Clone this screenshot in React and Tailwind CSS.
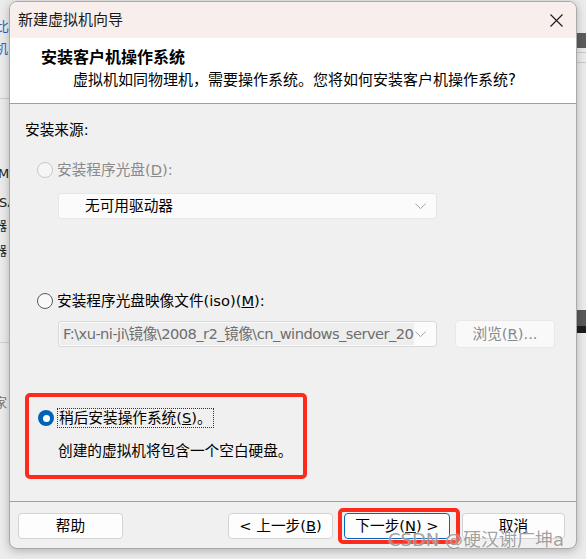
import React from 'react';

const Radio = ({ state }) => {
  if (state === 'checked') {
    return (
      <span className="w-4 h-4 shrink-0 rounded-full bg-[#0063b8] flex items-center justify-center">
        <span className="w-[7px] h-[7px] rounded-full bg-white" />
      </span>
    );
  }
  if (state === 'disabled') {
    return <span className="w-4 h-4 shrink-0 rounded-full border border-[#c8c8c8] bg-[#f6f6f6]" />;
  }
  return <span className="w-4 h-4 shrink-0 rounded-full border border-[#5a5a5a] bg-[#f9f9f9]" />;
};

const Chevron = () => (
  <svg width="11" height="7" viewBox="0 0 11 7" className="shrink-0">
    <path d="M0.5 0.8L5.5 5.6L10.5 0.8" fill="none" stroke="#a2a2a2" strokeWidth="1" />
  </svg>
);

const Button = ({ children, primary, className = '' }) => (
  <div
    className={`h-[26px] flex items-center justify-center rounded-[4px] bg-[#fdfdfd] text-[14.67px] leading-[20px] text-black ${
      primary ? 'border border-[#0067c0]' : 'border border-[#d3d3d3]'
    } ${className}`}
  >
    {children}
  </div>
);

const App = () => {
  return (
    <div className="w-[586px] h-[559px] relative overflow-hidden bg-[#ececec] font-['DejaVu_Sans','Noto_Sans_CJK_SC',sans-serif]">
      {/* desktop behind the window */}
      <div className="absolute left-[-4px] top-[20px] text-[13px] leading-[14px] text-[#2a62c9]">比</div>
      <div className="absolute left-[-5px] top-[42px] text-[13px] leading-[14px] text-[#2a62c9]">机</div>
      <div className="absolute left-0 top-[98px] w-[10px] h-px bg-[#cfcfcf]" />
      <div className="absolute left-[-2px] top-[167px] text-[13px] leading-[14px] text-[#222]">Me</div>
      <div className="absolute left-[-1px] top-[196px] text-[13px] leading-[14px] text-[#222]">SA</div>
      <div className="absolute left-[-6px] top-[219px] text-[13px] leading-[14px] text-[#222]">器</div>
      <div className="absolute left-[-6px] top-[244px] text-[13px] leading-[14px] text-[#222]">器</div>
      <div className="absolute left-0 top-[342px] w-[10px] h-px bg-[#cfcfcf]" />
      <div className="absolute left-[-6px] top-[396px] text-[13px] leading-[14px] text-[#777]">家</div>
      <div className="absolute right-0 top-[33px] w-[10px] h-[15px] bg-[#5d5d5d]" />
      <div className="absolute right-0 top-[52px] w-[10px] h-px bg-[#c9c9c9]" />
      <div className="absolute right-0 top-[62px] w-[10px] h-px bg-[#c9c9c9]" />
      <div className="absolute right-0 top-[310px] w-[10px] h-[16px] bg-[#5a5a5a]" />
      <div className="absolute right-0 top-[326px] w-[10px] h-[7px] bg-[#1e1e1e]" />

      {/* dialog window */}
      <div className="absolute left-[9px] top-[1px] w-[568px] h-[548px] flex flex-col rounded-[8px] overflow-hidden border border-[#a9a9a9] bg-[#f0f0f0] shadow-[0_2px_10px_rgba(0,0,0,0.25)]">
        {/* title bar */}
        <div className="h-[36px] shrink-0 flex items-center justify-between pl-[8px] pr-[13px] bg-[#f8efec]">
          <span className="text-[15px] leading-[20px] text-[#1a1a1a]">新建虚拟机向导</span>
          <svg width="13" height="13" viewBox="0 0 13 13">
            <path d="M0.5 0.5L12.5 12.5M12.5 0.5L0.5 12.5" stroke="#1a1a1a" strokeWidth="1.1" />
          </svg>
        </div>

        {/* header */}
        <div className="h-[66px] shrink-0 bg-white border-b border-[#a0a0a0] pt-[9px] pl-[31px]">
          <div className="text-[16px] leading-[21px] font-bold text-black">安装客户机操作系统</div>
          <div className="mt-[2px] pl-[32px] text-[15px] leading-[21px] text-black whitespace-nowrap">
            虚拟机如同物理机，需要操作系统。您将如何安装客户机操作系统?
          </div>
        </div>

        {/* body */}
        <div className="h-[398px] shrink-0 flex flex-col pl-[15px] pt-[16px] border-b border-[#a0a0a0]">
          <div className="text-[14.67px] leading-[20px] text-black">安装来源:</div>

          <div className="mt-[20px] ml-[12px] flex items-center gap-[4px] h-[20px]">
            <Radio state="disabled" />
            <span className="text-[14.67px] leading-[20px] text-[#8a8a8a]">
              安装程序光盘(<span className="underline">D</span>):
            </span>
          </div>

          <div className="mt-[13px] ml-[33px] w-[379px] h-[26px] flex items-center justify-between pl-[26px] pr-[10px] rounded-[3px] border border-[#e6e6e6] bg-[#fbfbfb]">
            <span className="text-[14.67px] leading-[20px] text-black">无可用驱动器</span>
            <Chevron />
          </div>

          <div className="mt-[72px] ml-[12px] flex items-center gap-[4px] h-[20px]">
            <Radio state="normal" />
            <span className="text-[14.67px] leading-[20px] text-black">
              安装程序光盘映像文件(iso)(<span className="underline">M</span>):
            </span>
          </div>

          <div className="mt-[10px] ml-[33px] flex items-start gap-[18px]">
            <div className="w-[379px] h-[26px] flex items-center justify-between pr-[10px] rounded-[3px] border border-[#d9d9d9] bg-[#fbfbfb]">
              <div className="w-[354px] h-[22px] ml-[1px] flex items-center pl-[3px] bg-[#eeeeee] overflow-hidden whitespace-nowrap text-[14.67px] leading-[20px] tracking-[-0.55px] text-[#6e6e6e]">
                F:\xu-ni-ji\镜像\2008_r2_镜像\cn_windows_server_2008_r2.iso
              </div>
              <Chevron />
            </div>
            <div className="w-[100px] h-[28px] -mt-[1px] flex items-center justify-center rounded-[4px] border border-[#e8e8e8] bg-[#f9f9f9] text-[14.67px] leading-[20px] text-[#8a8a8a]">
              浏览(<span className="underline">R</span>)...
            </div>
          </div>

          {/* highlighted option */}
          <div className="mt-[45px] w-[282px] rounded-[5px] border-[4px] border-[#ff2a1c] pl-[9px] pt-[11px] pb-[14px]">
            <div className="flex items-center gap-[3px] h-[20px]">
              <Radio state="checked" />
              <span className="px-[1px] border border-dotted border-[#333] text-[14.67px] leading-[18px] text-black">
                稍后安装操作系统(<span className="underline">S</span>)。
              </span>
            </div>
            <div className="mt-[13px] pl-[20px] text-[14.67px] leading-[20px] text-black">
              创建的虚拟机将包含一个空白硬盘。
            </div>
          </div>
        </div>

        {/* footer */}
        <div className="flex-1 flex items-start pt-[11px] pl-[8px] pr-[11px]">
          <Button className="w-[105px]">帮助</Button>
          <Button className="w-[105px] ml-auto">
            &lt; 上一步(<span className="underline">B</span>)
          </Button>
          <div className="relative ml-[11px]">
            <Button primary className="w-[106px]">
              下一步(<span className="underline">N</span>) &gt;
            </Button>
            <div className="absolute -left-[6px] -right-[10px] -top-[5px] -bottom-[5px] rounded-[5px] border-[4px] border-[#ff2a1c]" />
          </div>
          <Button className="w-[103px] ml-[12px]">取消</Button>
        </div>
      </div>

      {/* watermark */}
      <div className="absolute left-[388px] top-[529px] text-[18px] leading-[22px] text-[rgba(130,130,130,0.75)] [text-shadow:0_0_2px_rgba(255,255,255,0.9)] whitespace-nowrap">
        CSDN @硬汉谢广坤a
      </div>
    </div>
  );
};

export default App;
